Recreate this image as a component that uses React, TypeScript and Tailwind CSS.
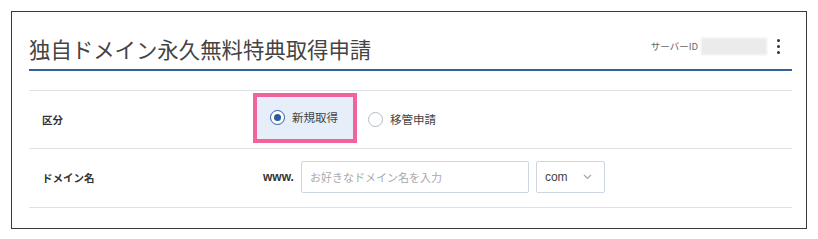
import { useState } from 'react';

const font = { fontFamily: '"Noto Sans CJK JP", "Noto Sans", sans-serif' };

function Radio({ checked, label }: { checked: boolean; label: string }) {
  return (
    <div className="flex items-center gap-[7px]">
      <span
        className={`flex h-[15px] w-[15px] items-center justify-center rounded-full border-[1.5px] bg-white ${
          checked ? 'border-[#2d5a9c]' : 'border-[#b4bcc8]'
        }`}
      >
        {checked && <span className="h-[7px] w-[7px] rounded-full bg-[#2d5a9c]" />}
      </span>
      <span className="text-[11.5px] leading-none text-[#444]">{label}</span>
    </div>
  );
}

export default function App() {
  const [kind] = useState<'new' | 'transfer'>('new');

  return (
    <div className="h-[239px] w-[818px] bg-white pl-[11px] pt-[11px]" style={font}>
      <div className="h-[218px] w-[796px] border border-[#3a3a3a] pl-[17px] pr-[14px] pt-[21px]">
        {/* header */}
        <div className="flex h-[31px] items-center justify-between">
          <h1 className="text-[21.4px] font-normal leading-none text-[#444]">
            独自ドメイン永久無料特典取得申請
          </h1>
          <div className="mb-[4px] flex items-center pr-[12px]">
            <span className="text-[9.5px] text-[#666]">サーバーID</span>
            <span className="ml-[3px] h-[17px] w-[66px] bg-[#ebebeb] blur-[1px]" />
            <span className="ml-[10px] flex flex-col gap-[3px]">
              <span className="h-[3px] w-[3px] rounded-full bg-[#333]" />
              <span className="h-[3px] w-[3px] rounded-full bg-[#333]" />
              <span className="h-[3px] w-[3px] rounded-full bg-[#333]" />
            </span>
          </div>
        </div>
        <div className="mt-[5px] h-[2px] bg-[#33609e]" />

        {/* form */}
        <div className="mt-[19px] border-t border-[#dde2e8]">
          <div className="flex h-[58px] items-center border-b border-[#dde2e8]">
            <div className="w-[224px] pl-[13px] text-[10.5px] font-bold text-[#333]">区分</div>
            <div className="flex items-center">
              <div className="-mt-[4px] flex h-[50px] w-[104px] items-center border-[4px] border-[#f2639c] bg-[#e6eff9] pl-[13px]">
                <Radio checked={kind === 'new'} label="新規取得" />
              </div>
              <div className="ml-[11px]">
                <Radio checked={kind === 'transfer'} label="移管申請" />
              </div>
            </div>
          </div>
          <div className="flex h-[59px] items-center border-b border-[#dde2e8]">
            <div className="w-[224px] pl-[13px] text-[10.5px] font-bold text-[#333]">ドメイン名</div>
            <div className="-mt-[2px] flex items-center pl-[10px]">
              <span
                className="text-[12px] font-bold text-[#333]"
                style={{ fontFamily: '"Liberation Sans", Arial, sans-serif' }}
              >
                www.
              </span>
              <div className="ml-[7px] flex h-[32px] w-[228px] items-center rounded-[2px] border border-[#cdd6e1] pl-[8px] text-[11px] text-[#a9a9a9]">
                お好きなドメイン名を入力
              </div>
              <div className="ml-[7px] flex h-[32px] w-[69px] items-center rounded-[2px] border border-[#cdd6e1] pl-[8px] pr-[12px]">
                <span
                  className="text-[12px] text-[#444]"
                  style={{ fontFamily: '"Liberation Sans", Arial, sans-serif' }}
                >
                  com
                </span>
                <svg className="ml-auto" width="9" height="6" viewBox="0 0 9 6" fill="none">
                  <path d="M1 1l3.5 3.5L8 1" stroke="#9aaabb" strokeWidth="1.2" />
                </svg>
              </div>
            </div>
          </div>
        </div>
      </div>
    </div>
  );
}
